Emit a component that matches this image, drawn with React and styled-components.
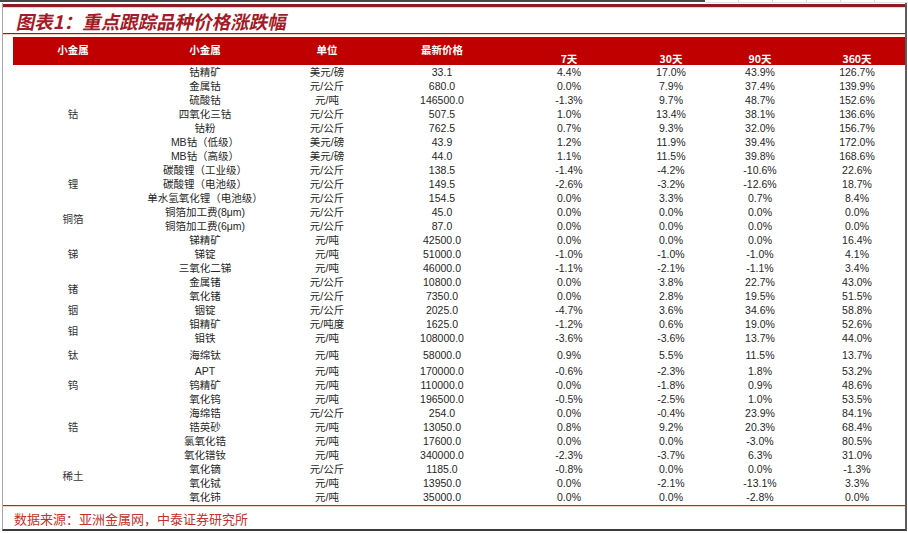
import React from 'react';
import styled, { createGlobalStyle } from 'styled-components';

const GlobalStyle = createGlobalStyle`
  html, body {
    margin: 0;
    padding: 0;
    background: #fff;
  }
  body {
    font-family: "Liberation Sans", "Noto Sans CJK SC", Arial, sans-serif;
  }
`;

const Page = styled.div`
  width: 908px;
  height: 533px;
  overflow: hidden;
  background: #fff;
`;

const TopStrip = styled.div`
  display: flex;
  height: 3px;
`;

const DarkEdge = styled.div`
  width: 740px;
  height: 2px;
  background: #474747;
`;

const SheetCells = styled.div`
  flex: 1;
  display: flex;
  padding-left: 33px;
  border-bottom: 1px solid #e2e2e2;
`;

const SheetCell = styled.div`
  width: 33px;
  border-left: 1px solid #d6d6d6;
`;

const Frame = styled.div`
  margin-left: 2px;
  width: 902px;
  border-left: 1px solid #a8a8a8;
  border-right: 2px solid #5c5c5c;
  border-bottom: 2px solid #3c3c3c;
  height: 526px;
  display: flex;
  flex-direction: column;
`;

const Rule = styled.div`
  height: ${p => p.$thick ? '3px' : '1px'};
  margin-top: ${p => p.$top || 0}px;
  background: ${p => p.$color || '#8e1b1f'};
  box-shadow: 0 1px 0 #f4d2c2;
`;

const Title = styled.h1`
  margin: 0;
  padding: 3px 0 0 12px;
  height: 23px;
  font-family: "Noto Sans CJK SC", sans-serif;
  font-size: 18.5px;
  line-height: 23px;
  font-weight: 700;
  color: #a11c26;
`;

const Slant = styled.span`
  display: inline-block;
  transform: skewX(-12deg);
  transform-origin: left bottom;
`;

const TableWrap = styled.div`
  margin: 3px 0 0 10px;
`;

const Table = styled.table`
  width: 892px;
  border-collapse: collapse;
  table-layout: fixed;
  font-size: 10.5px;
  color: #262626;
`;

const HeadRow = styled.tr`
  background: #c00000;
  height: 28px;
`;

const HeadCell = styled.th`
  padding: 0 0 ${p => p.$bottom ? '0' : '3px'};
  color: #fff;
  font-family: "Noto Sans CJK SC", sans-serif;
  font-size: 10.5px;
  font-weight: 700;
  line-height: 12px;
  text-align: center;
  vertical-align: ${p => p.$bottom ? 'bottom' : 'middle'};
`;

const Row = styled.tr`
  height: ${p => p.$tall ? 19 : 14}px;
`;

const Cell = styled.td`
  padding: 0;
  height: ${p => p.$tall ? 19 : 14}px;
  line-height: 14px;
  text-align: center;
  white-space: nowrap;
  overflow: hidden;
`;

const GroupCell = styled(Cell)`
  vertical-align: middle;
  color: #333;
`;

const Footer = styled.div`
  padding: 4px 0 0 11px;
  font-family: "Noto Sans CJK SC", sans-serif;
  font-size: 13px;
  line-height: 18px;
  color: #c3322c;
`;

const widths = [120, 144, 100, 130, 124, 80, 98, 96];

const groups = [
  {
    name: '钴',
    rows: [
      ['钴精矿', '美元/磅', '33.1', '4.4%', '17.0%', '43.9%', '126.7%'],
      ['金属钴', '元/公斤', '680.0', '0.0%', '7.9%', '37.4%', '139.9%'],
      ['硫酸钴', '元/吨', '146500.0', '-1.3%', '9.7%', '48.7%', '152.6%'],
      ['四氧化三钴', '元/公斤', '507.5', '1.0%', '13.4%', '38.1%', '136.6%'],
      ['钴粉', '元/公斤', '762.5', '0.7%', '9.3%', '32.0%', '156.7%'],
      ['MB钴（低级）', '美元/磅', '43.9', '1.2%', '11.9%', '39.4%', '172.0%'],
      ['MB钴（高级）', '美元/磅', '44.0', '1.1%', '11.5%', '39.8%', '168.6%'],
    ],
  },
  {
    name: '锂',
    rows: [
      ['碳酸锂（工业级）', '元/公斤', '138.5', '-1.4%', '-4.2%', '-10.6%', '22.6%'],
      ['碳酸锂（电池级）', '元/公斤', '149.5', '-2.6%', '-3.2%', '-12.6%', '18.7%'],
      ['单水氢氧化锂（电池级）', '元/公斤', '154.5', '0.0%', '3.3%', '0.7%', '8.4%'],
    ],
  },
  {
    name: '铜箔',
    rows: [
      ['铜箔加工费(8μm)', '元/公斤', '45.0', '0.0%', '0.0%', '0.0%', '0.0%'],
      ['铜箔加工费(6μm)', '元/公斤', '87.0', '0.0%', '0.0%', '0.0%', '0.0%'],
    ],
  },
  {
    name: '锑',
    rows: [
      ['锑精矿', '元/吨', '42500.0', '0.0%', '0.0%', '0.0%', '16.4%'],
      ['锑锭', '元/吨', '51000.0', '-1.0%', '-1.0%', '-1.0%', '4.1%'],
      ['三氧化二锑', '元/吨', '46000.0', '-1.1%', '-2.1%', '-1.1%', '3.4%'],
    ],
  },
  {
    name: '锗',
    rows: [
      ['金属锗', '元/公斤', '10800.0', '0.0%', '3.8%', '22.7%', '43.0%'],
      ['氧化锗', '元/公斤', '7350.0', '0.0%', '2.8%', '19.5%', '51.5%'],
    ],
  },
  {
    name: '铟',
    rows: [
      ['铟锭', '元/公斤', '2025.0', '-4.7%', '3.6%', '34.6%', '58.8%'],
    ],
  },
  {
    name: '钼',
    rows: [
      ['钼精矿', '元/吨度', '1625.0', '-1.2%', '0.6%', '19.0%', '52.6%'],
      ['钼铁', '元/吨', '108000.0', '-3.6%', '-3.6%', '13.7%', '44.0%'],
    ],
  },
  {
    name: '钛',
    tall: true,
    rows: [
      ['海绵钛', '元/吨', '58000.0', '0.9%', '5.5%', '11.5%', '13.7%'],
    ],
  },
  {
    name: '钨',
    rows: [
      ['APT', '元/吨', '170000.0', '-0.6%', '-2.3%', '1.8%', '53.2%'],
      ['钨精矿', '元/吨', '110000.0', '0.0%', '-1.8%', '0.9%', '48.6%'],
      ['氧化钨', '元/吨', '196500.0', '-0.5%', '-2.5%', '1.0%', '53.5%'],
    ],
  },
  {
    name: '锆',
    rows: [
      ['海绵锆', '元/公斤', '254.0', '0.0%', '-0.4%', '23.9%', '84.1%'],
      ['锆英砂', '元/吨', '13050.0', '0.8%', '9.2%', '20.3%', '68.4%'],
      ['氯氧化锆', '元/吨', '17600.0', '0.0%', '0.0%', '-3.0%', '80.5%'],
    ],
  },
  {
    name: '稀土',
    rows: [
      ['氧化镨钕', '元/吨', '340000.0', '-2.3%', '-3.7%', '6.3%', '31.0%'],
      ['氧化镝', '元/公斤', '1185.0', '-0.8%', '0.0%', '0.0%', '-1.3%'],
      ['氧化铽', '元/吨', '13950.0', '0.0%', '-2.1%', '-13.1%', '3.3%'],
      ['氧化铈', '元/吨', '35000.0', '0.0%', '0.0%', '-2.8%', '0.0%'],
    ],
  },
];

const heads = [
  { label: '小金属' },
  { label: '小金属' },
  { label: '单位' },
  { label: '最新价格' },
  { label: '7天', bottom: true },
  { label: '30天', bottom: true },
  { label: '90天', bottom: true },
  { label: '360天', bottom: true },
];

export default function App() {
  return (
    <>
      <GlobalStyle />
      <Page>
        <TopStrip>
          <DarkEdge />
          <SheetCells>
            {[0, 1, 2, 3, 4].map(i => <SheetCell key={i} />)}
          </SheetCells>
        </TopStrip>
        <Frame>
          <Rule $thick $top={1} />
          <Title><Slant>图表1：重点跟踪品种价格涨跌幅</Slant></Title>
          <Rule />
          <TableWrap>
            <Table>
              <colgroup>
                {widths.map((w, i) => <col key={i} style={{ width: w }} />)}
              </colgroup>
              <thead>
                <HeadRow>
                  {heads.map((h, i) => (
                    <HeadCell key={i} $bottom={h.bottom}>{h.label}</HeadCell>
                  ))}
                </HeadRow>
              </thead>
              <tbody>
                {groups.map(g =>
                  g.rows.map((r, i) => (
                    <Row key={g.name + i} $tall={g.tall}>
                      {i === 0 && (
                        <GroupCell rowSpan={g.rows.length}>{g.name}</GroupCell>
                      )}
                      {r.map((v, j) => (
                        <Cell key={j} $tall={g.tall}>{v}</Cell>
                      ))}
                    </Row>
                  ))
                )}
              </tbody>
            </Table>
          </TableWrap>
          <Rule $top={1} $color="#a8302c" />
          <Footer>数据来源：亚洲金属网，中泰证券研究所</Footer>
        </Frame>
      </Page>
    </>
  );
}
